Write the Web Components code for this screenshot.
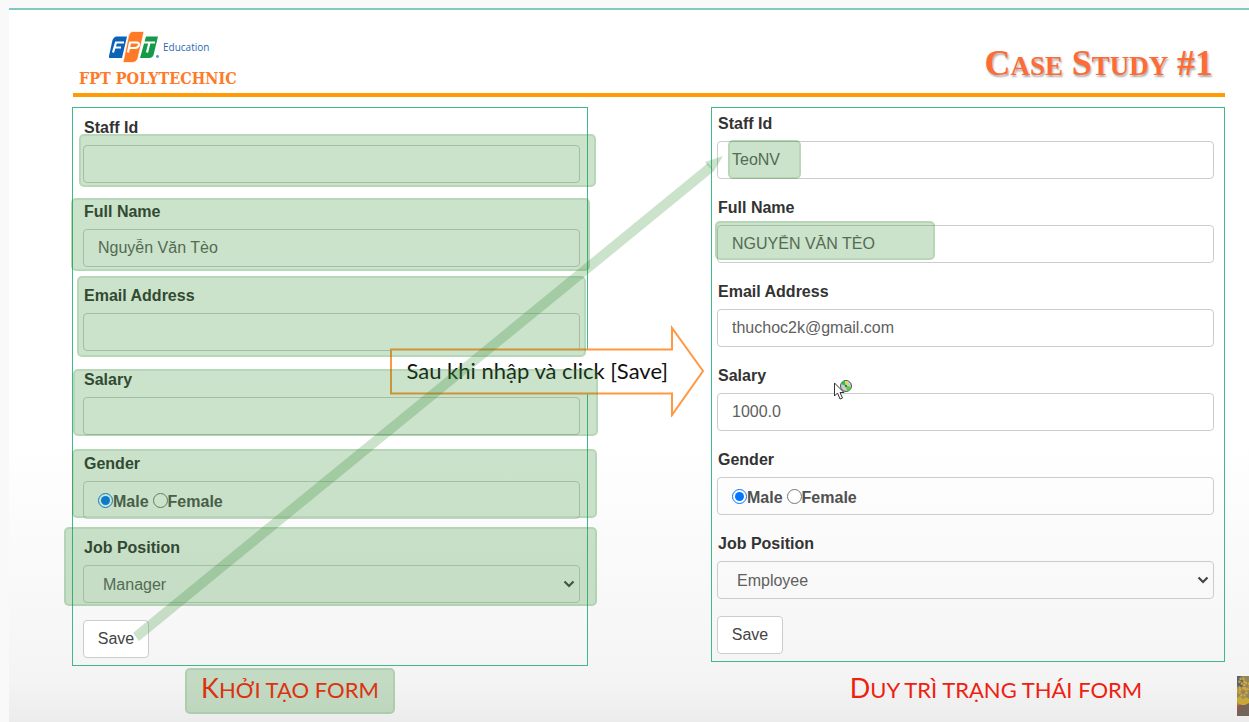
<!DOCTYPE html>
<html lang="vi">
<head>
<meta charset="utf-8">
<title>Case Study #1</title>
<style>
  body { margin: 0; background: #f9f9f9; font-family: "Liberation Sans", Arial, sans-serif; font-size: 16px; color: #333; }
</style>
</head>
<body>
<case-slide>
  <slide-header slot="header" text="Case Study #1"></slide-header>
  <form-panel slot="before" style="--pad: 8px 7px 7px 10px">
    <text-field label="Staff Id"><mark-box style="inset: 18px -16px -4px -4px"></mark-box></text-field>
    <text-field label="Full Name" value="Nguyễn Văn Tèo"><mark-box style="inset: -2px -10px -4px -12px"></mark-box></text-field>
    <text-field label="Email Address"><mark-box style="inset: -8px -6px -6px -6px"></mark-box></text-field>
    <text-field label="Salary"><mark-box style="inset: 1px -18px -1px -10px"></mark-box></text-field>
    <radio-field label="Gender" options="Male,Female"><mark-box style="inset: -3px -17px 1px -11px"></mark-box></radio-field>
    <select-field label="Job Position" options="Manager,Employee"><mark-box style="inset: -9px -17px -3px -19px"></mark-box></select-field>
  </form-panel>
  <form-panel slot="after" style="--pad: 4px 10px 7px 5px">
    <text-field label="Staff Id" value="TeoNV"><mark-box style="inset: 28px auto 0 11px; width: 73px"></mark-box></text-field>
    <text-field label="Full Name" value="NGUYỄN VĂN TÈO"><mark-box style="inset: 25px auto 3px -2px; width: 220px"></mark-box></text-field>
    <text-field label="Email Address" value="thuchoc2k@gmail.com"></text-field>
    <text-field label="Salary" value="1000.0"></text-field>
    <radio-field label="Gender" options="Male,Female"></radio-field>
    <select-field label="Job Position" options="Employee,Manager"></select-field>
  </form-panel>
  <callout-arrow slot="callout">Sau khi nhập và click [Save]</callout-arrow>
  <slide-caption slot="caption-before" marked text="Khởi tạo form"></slide-caption>
  <slide-caption slot="caption-after" text="Duy trì trạng thái form"></slide-caption>
</case-slide>

<script>
class Base extends HTMLElement {
  constructor() {
    super();
    this.attachShadow({ mode: "open" });
  }
  connectedCallback() { this.shadowRoot.innerHTML = this.render(); }
}

customElements.define("case-slide", class extends Base {
  render() {
    return `<style>
      :host { display: block; box-sizing: border-box; min-height: calc(100vh - 8px); margin: 8px 0 0 9px; padding: 0 24px 8px 63px;
        border-top: 2px solid #7fc9c0; position: relative; overflow: hidden;
        background: linear-gradient(#fff 0, #fff 60%, #f7f7f7 86%, #f4f4f4 94%, #ececec 100%); }
      main { position: relative; display: grid; grid-template-columns: 516fr 123fr 514fr; align-items: start; margin-top: 10px; }
      .after { grid-column: 3; }
      .link { position: absolute; inset: 0; width: 100%; height: 100%; z-index: 3; pointer-events: none; overflow: visible; }
      .cursor { position: absolute; left: 66%; top: 271px; z-index: 4; }
      footer { display: grid; grid-template-columns: 516fr 123fr 514fr; margin-top: 2px; }
      .thumb { position: absolute; right: 0; bottom: 6px; }
      .c1 { padding-right: 80px; text-align: center; }
      .c2 { grid-column: 3; padding-left: 56px; text-align: center; }
    </style>
    <slot name="header"></slot>
    <main>
      <slot name="before"></slot>
      <div class="after"><slot name="after"></slot></div>
      <slot name="callout"></slot>
      <svg class="link" viewBox="0 0 1153 558" preserveAspectRatio="none" fill="#2e8b2e" fill-opacity=".25" aria-hidden="true">
        <path d="M61 525L67 533L642 64L636 56Z"/>
        <path d="M651 49L633 55L636 59L642 64Z"/>
      </svg>
      <svg class="cursor" width="22" height="22" viewBox="0 0 22 22" aria-hidden="true">
        <circle cx="13" cy="8" r="5.5" fill="#c9cdc9" stroke="#555"/>
        <path d="M13 8L8 6A5 5 0 0 1 12 3Z" fill="#19c95a"/><path d="M13 8L12 3A5 5 0 0 1 15 3.500Z" fill="#f5dc35"/>
        <path d="M13 8L18 9A5 5 0 0 1 14 13Z" fill="#45d922"/><circle cx="13" cy="8" r="1" fill="#444"/>
        <path d="M1.500 5V18L4.500 15L7 21L9.500 20L7 14.500H11Z" fill="#fff" stroke="#333"/>
      </svg>
    </main>
    <footer>
      <div class="c1"><slot name="caption-before"></slot></div>
      <div class="c2"><slot name="caption-after"></slot></div>
    </footer>
    <svg class="thumb" width="12" height="40" viewBox="0 0 12 40" aria-hidden="true">
      <path fill="#91865f" d="M0 0H12V40H0Z"/>
      <path fill="#75645a" d="M0 30L12 26V40H0Z"/><path fill="#59616b" d="M0 0H4L7 9L3 12H0Z"/>
      <g fill="none" stroke="#d3a93a" stroke-width="2.500" stroke-dasharray="2 1"><circle cx="5" cy="5" r="2.500"/><circle cx="10" cy="10" r="3"/><circle cx="6" cy="16" r="3.500"/><circle cx="1" cy="13" r="2"/></g>
      <path fill="#c9a838" d="M0 22L3 20L6 23L9 21L12 23V27L8 29H3L0 26Z"/><path fill="#a65548" d="M0 30L4 28L2 33L0 35Z"/>
    </svg>`;
  }
});

customElements.define("slide-header", class extends Base {
  render() {
    const words = this.getAttribute("text").split(" ").map(w => `<span>${w}</span>`).join(" ");
    return `<style>
      :host { display: flex; justify-content: space-between; align-items: center; box-sizing: border-box; height: 87px; padding: 16px 12px 0 6px; margin-left: 1px; border-bottom: 4px solid #ff9b05; }
      .brand { display: flex; flex-direction: column; gap: 6px; }
      .logo { display: flex; align-items: center; gap: 4px; margin-left: 30px; color: #2a6bb0; }
      .edu { font: 500 10px/32px "Open Sans", "Noto Sans", sans-serif; }
      .name { font: 700 16px/20px "DejaVu Serif Condensed", "DejaVu Serif", serif; font-stretch: condensed; color: #ff7a26; white-space: nowrap; }
      h1 { margin: 10px 0 0; font: 700 35px/40px "Liberation Serif", serif; color: #ff6b35; text-shadow: 1px 2px 2px #aaa; white-space: nowrap; }
      h1 span { display: inline-block; font-size: 27px; text-transform: uppercase; }
      h1 span::first-letter { font-size: 36px; }
    </style>
    <div class="brand">
      <div class="logo">
        <svg width="50" height="32" viewBox="0 0 50 32" role="img" aria-label="FPT">
          <path fill="#0b63b8" d="M7 5.500H18L13 27H1Q-.5 27 0 25L3.500 9Q4.500 6 7 5.500Z"/>
          <path fill="#159a48" d="M37 5.500H49L44.500 24Q43.500 27 40 27H31Z"/>
          <path fill="#ff7a26" stroke="#fff" stroke-width=".7" d="M23 .5H35L29 27Q27.500 31.500 23 31.500H14L19.500 5Q20.500 1 23 .5Z"/>
          <g fill="none" stroke="#fff" stroke-width="2.200"><path d="M4 21.500L7 11.500H15M5.500 16.500H12"/><path d="M19 21.500L21 11.500H28Q31 12 29.500 15Q28.500 17 26 17H20"/><path d="M35 11.500H46M40.500 11.500L38 21.500"/></g>
          <circle cx="48.500" cy="25.500" r="1.400" fill="#5b92c9"/>
        </svg>
        <span class="edu">Education</span>
      </div>
      <div class="name">FPT POLYTECHNIC</div>
    </div>
    <h1>${words}</h1>`;
  }
});

customElements.define("form-panel", class extends Base {
  render() {
    return `<style>
      :host { display: block; box-sizing: border-box; border: 1px solid #3dba88; padding: var(--pad); }
      form { display: flex; flex-direction: column; gap: 17px; align-items: stretch; }
      button { align-self: flex-start; box-sizing: border-box; height: 38px; width: 66px; border: 1px solid #ccc; border-radius: 4px; background: #fff; font: inherit; color: #444; padding: 0; }
    </style>
    <form><slot></slot><button type="button">Save</button></form>`;
  }
});

const fieldStyle = `
  :host { display: block; position: relative; }
  .label { display: block; font-weight: 700; line-height: 24px; margin-bottom: 5px; padding-left: 1px; }
  .control { display: block; box-sizing: border-box; width: 100%; height: 38px; margin: 0; padding: 0 14px; border: 1px solid #ccc; border-radius: 4px; background: transparent; font: inherit; color: #606060; outline: none; }
`;

customElements.define("text-field", class extends Base {
  render() {
    return `<style>${fieldStyle}</style>
      <label class="label" for="c">${this.getAttribute("label")}</label>
      <input class="control" id="c" type="text" value="${this.getAttribute("value") || ""}">
      <slot></slot>`;
  }
});

customElements.define("radio-field", class extends Base {
  render() {
    const items = this.getAttribute("options").split(",").map((o, i) =>
      `<label><input type="radio" name="g" ${i ? "" : "checked"}>${o}</label>`).join("");
    return `<style>${fieldStyle}
      .control { display: flex; align-items: center; gap: 4px; font-weight: 700; color: #505050; }
      .control label { display: flex; align-items: center; line-height: 20px; padding-top: 3px; }
      input { width: 15px; height: 15px; margin: 0 0 3px; }
    </style>
      <span class="label" id="l">${this.getAttribute("label")}</span>
      <div class="control" role="radiogroup" aria-labelledby="l">${items}</div>
      <slot></slot>`;
  }
});

customElements.define("select-field", class extends Base {
  render() {
    const items = this.getAttribute("options").split(",").map(o => `<option>${o}</option>`).join("");
    return `<style>${fieldStyle}
      .control { appearance: none; padding-left: 19px; }
      .wrap { display: grid; align-items: center; }
      .wrap > * { grid-area: 1 / 1; }
      svg { justify-self: end; margin-right: 5px; pointer-events: none; }
    </style>
      <label class="label" for="c">${this.getAttribute("label")}</label>
      <div class="wrap">
        <select class="control" id="c">${items}</select>
        <svg width="12" height="8" viewBox="0 0 12 8" fill="none" stroke="#444" stroke-width="2.200" aria-hidden="true"><path d="M1.500 1.500L6 6L10.500 1.500"/></svg>
      </div>
      <slot></slot>`;
  }
});

customElements.define("mark-box", class extends Base {
  render() {
    return `<style>:host { position: absolute; z-index: 2; box-sizing: border-box; border: 2px solid rgba(46,139,46,.12); border-radius: 5px; background: rgba(46,139,46,.25); pointer-events: none; }</style>`;
  }
});

customElements.define("callout-arrow", class extends Base {
  render() {
    return `<style>
      :host { position: absolute; z-index: 1; left: calc(50% - 259px); top: 218px; width: 315px; height: 92px; display: flex; align-items: center; box-sizing: border-box; padding: 0 0 0 17px; font: 22px/28px Lato, "Noto Sans", sans-serif; color: #111; white-space: nowrap; }
      svg { position: absolute; inset: 0; }
      span { position: relative; }
    </style>
    <svg width="315" height="92" viewBox="0 0 315 92" aria-hidden="true"><path d="M1 24.500H282V3L313 46L282 90V68.500H1Z" fill="#fff" stroke="#ff9840" stroke-width="2"/></svg>
    <span><slot></slot></span>`;
  }
});

customElements.define("slide-caption", class extends Base {
  render() {
    return `<style>
      :host { display: inline-block; box-sizing: border-box; height: 46px; position: relative; padding: 0 16px; }
      p { position: relative; z-index: 3; margin: 0; font: 22px/40px Lato, "Noto Sans", sans-serif; text-transform: uppercase; color: #ee2010; white-space: nowrap; }
      :host([marked]) p { color: #dc3210; }
      p::first-letter { font-size: 27px; }
      mark-box { inset: 0; }
    </style><p>${this.getAttribute("text")}</p>${this.hasAttribute("marked") ? "<mark-box></mark-box>" : ""}`;
  }
});
</script>
</body>
</html>
